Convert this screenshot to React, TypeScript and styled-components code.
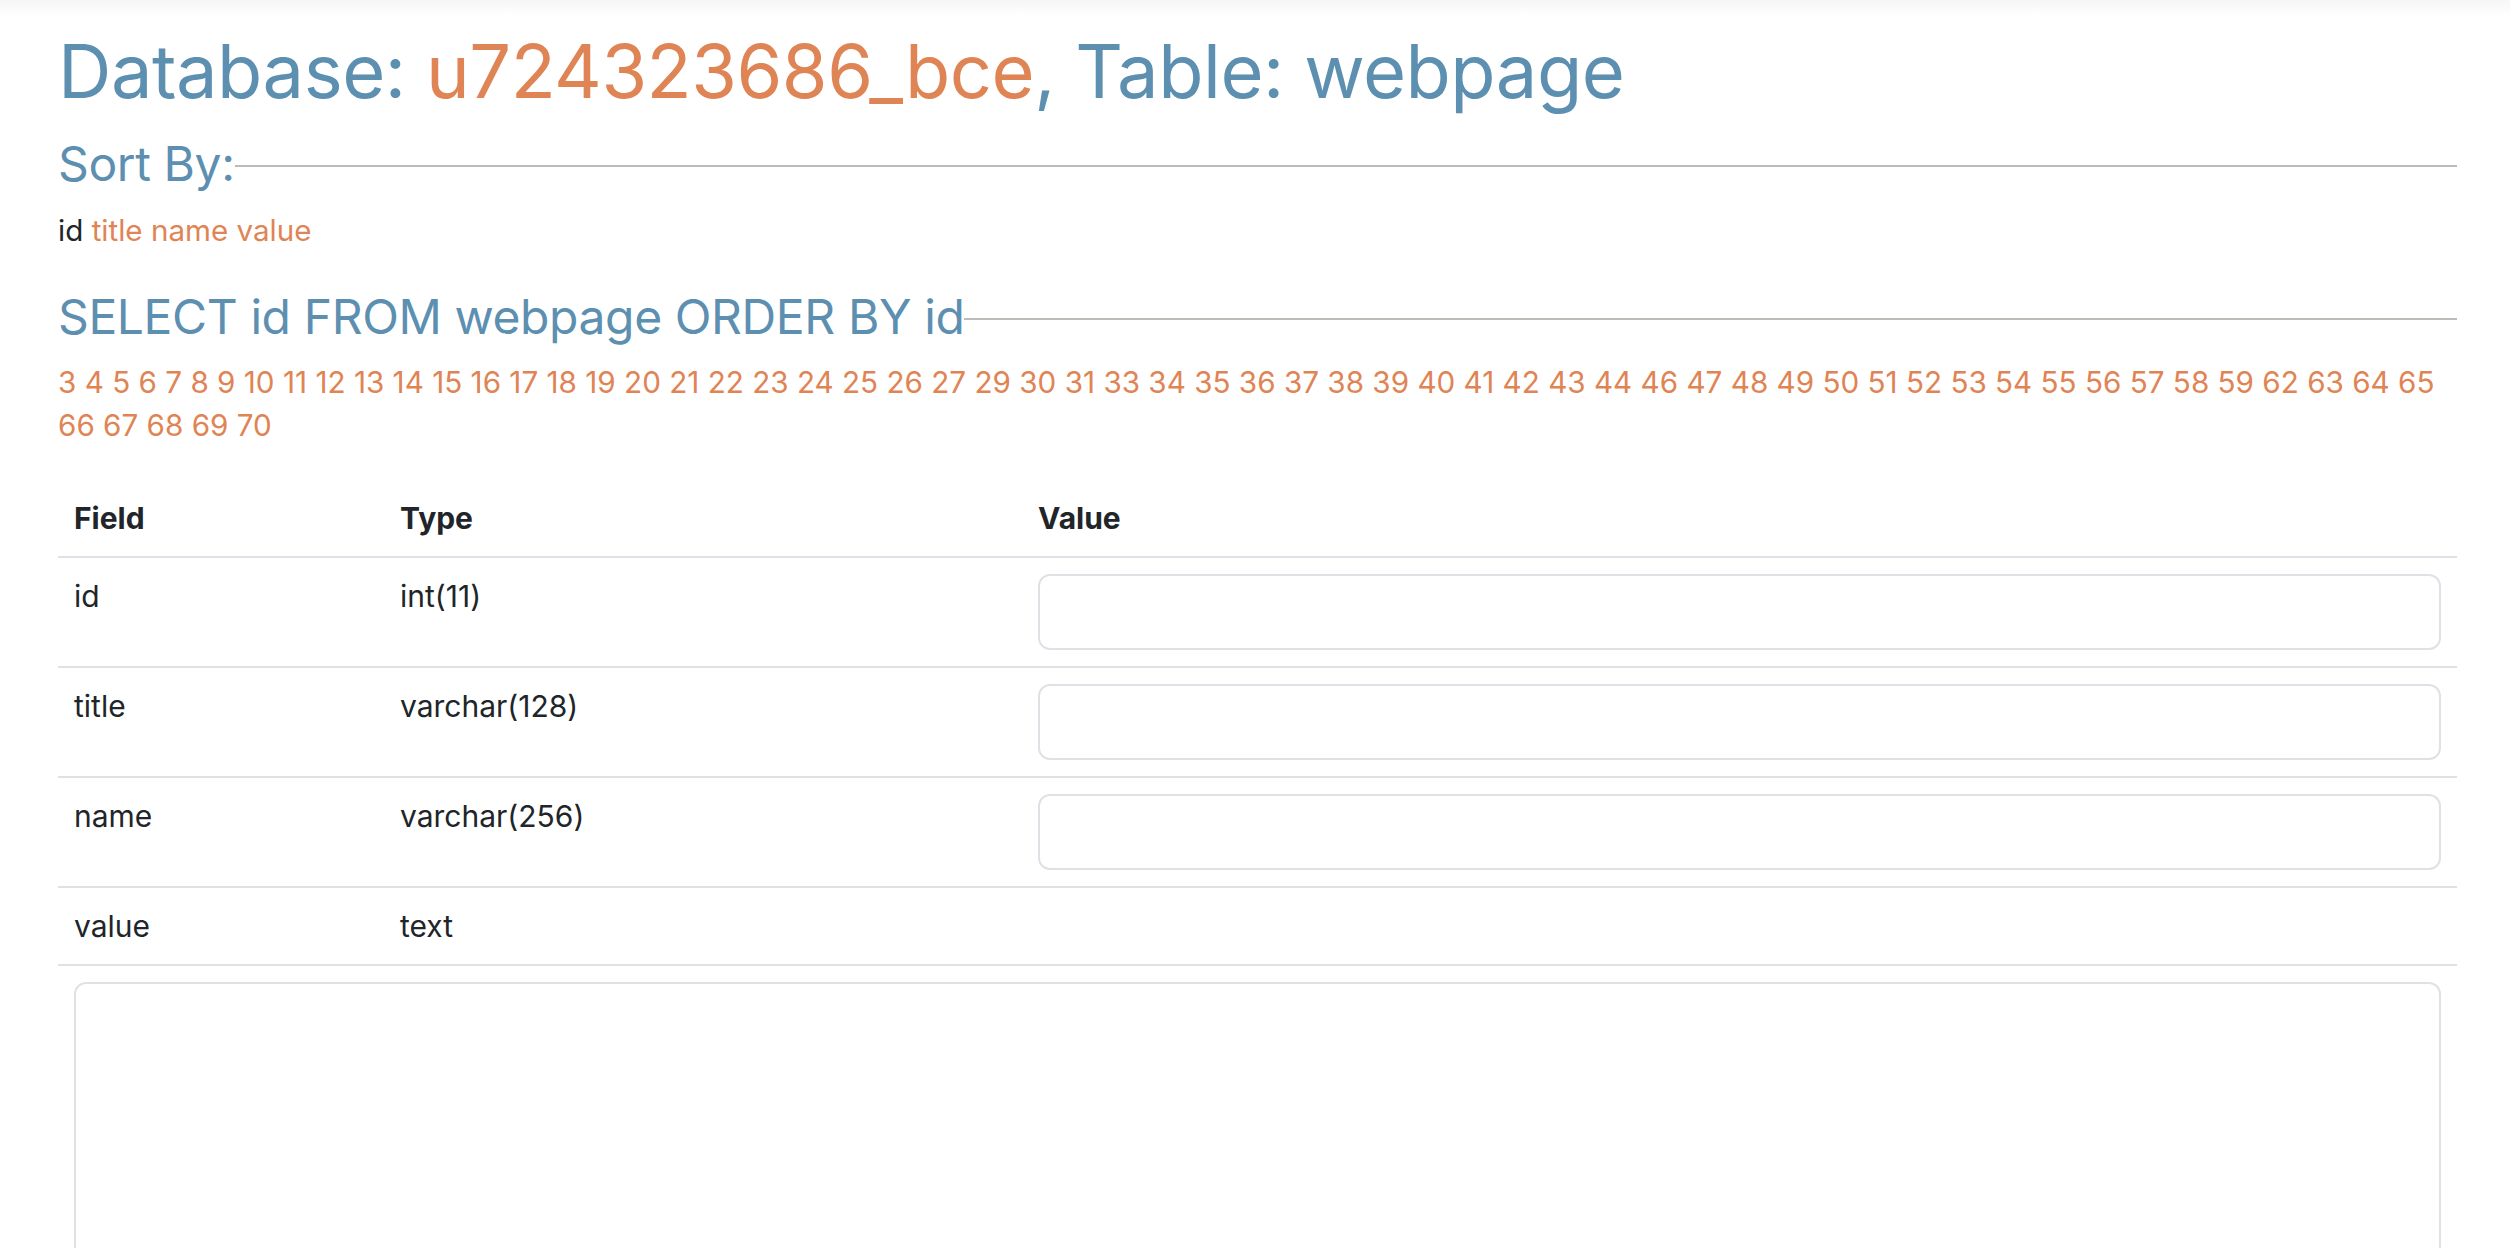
import React from "react";
import styled, { createGlobalStyle } from "styled-components";

const GlobalStyle = createGlobalStyle`
  html, body {
    margin: 0;
    padding: 0;
    background: linear-gradient(#f6f6f6 0px, #ffffff 16px) no-repeat, #ffffff;
    font-family: Inter, "Noto Sans", "Liberation Sans", sans-serif;
    color: #212529;
  }
  * { box-sizing: border-box; }
`;

const BLUE = "#5d8fb1";
const ORANGE = "#df8454";
const LINE = "#dee2e6";

const Page = styled.main`
  padding: 25px 53px 0 58px;
  height: 1248px;
  overflow: hidden;
`;

const Title = styled.h1`
  margin: 0;
  font-size: 74px;
  line-height: 92px;
  font-weight: 400;
  color: ${BLUE};
  letter-spacing: -0.5px;
`;

const Accent = styled.span`
  color: ${ORANGE};
`;

const SectionHeading = styled.h3<{ $top: number }>`
  margin: ${(p) => p.$top}px 0 0;
  display: flex;
  align-items: center;
  font-size: 48px;
  line-height: 58px;
  font-weight: 400;
  color: ${BLUE};
  letter-spacing: -0.4px;
  white-space: nowrap;

  &::after {
    content: "";
    flex: 1;
    height: 2px;
    margin-top: 4px;
    background: #bbbcb5;
  }
`;

const SortLine = styled.p`
  margin: 13px 0 0;
  font-size: 29.6px;
  line-height: 48px;
`;

const SortLink = styled.a<{ $active?: boolean }>`
  color: ${(p) => (p.$active ? "#212529" : ORANGE)};
  text-decoration: none;
`;

const IdList = styled.p`
  margin: 15px 0 0;
  font-size: 29.65px;
  line-height: 43.2px;
  color: ${ORANGE};
`;

const IdLink = styled.a`
  color: ${ORANGE};
  text-decoration: none;
`;

const Table = styled.table`
  margin-top: 33px;
  width: 100%;
  border-collapse: collapse;
  table-layout: fixed;
  font-size: 30px;
`;

const HeadCell = styled.th`
  text-align: left;
  font-weight: 700;
  padding: 16px;
  line-height: 44px;
  border-bottom: 2px solid ${LINE};
  vertical-align: top;
`;

const Cell = styled.td`
  padding: 16px;
  line-height: 44px;
  border-bottom: 2px solid ${LINE};
  vertical-align: top;
`;

const WideCell = styled.td`
  padding: 16px;
`;

const TextInput = styled.input`
  display: block;
  width: 100%;
  height: 76px;
  border: 2px solid ${LINE};
  border-radius: 12px;
  background: #fff;
  outline: none;
  font: inherit;
  padding: 0 24px;
`;

const TextArea = styled.textarea`
  display: block;
  width: 100%;
  height: 500px;
  border: 2px solid ${LINE};
  border-radius: 12px;
  background: #fff;
  outline: none;
  resize: none;
  font: inherit;
`;

const ids = [
  3, 4, 5, 6, 7, 8, 9, 10, 11, 12, 13, 14, 15, 16, 17, 18, 19, 20, 21, 22, 23,
  24, 25, 26, 27, 29, 30, 31, 33, 34, 35, 36, 37, 38, 39, 40, 41, 42, 43, 44,
  46, 47, 48, 49, 50, 51, 52, 53, 54, 55, 56, 57, 58, 59, 62, 63, 64, 65, 66,
  67, 68, 69, 70,
];

const fields = [
  { name: "id", type: "int(11)" },
  { name: "title", type: "varchar(128)" },
  { name: "name", type: "varchar(256)" },
];

export default function App() {
  return (
    <>
      <GlobalStyle />
      <Page>
        <Title>
          Database: <Accent>u724323686_bce</Accent>, Table: webpage
        </Title>
        <SectionHeading $top={18}>Sort By:</SectionHeading>
        <SortLine>
          <SortLink $active href="#">id</SortLink>{" "}
          <SortLink href="#">title</SortLink>{" "}
          <SortLink href="#">name</SortLink>{" "}
          <SortLink href="#">value</SortLink>
        </SortLine>
        <SectionHeading $top={34}>SELECT id FROM webpage ORDER BY id</SectionHeading>
        <IdList>
          {ids.map((id, i) => (
            <React.Fragment key={id}>
              {i > 0 ? " " : ""}
              <IdLink href="#">{id}</IdLink>
            </React.Fragment>
          ))}
        </IdList>
        <Table>
          <colgroup>
            <col style={{ width: 326 }} />
            <col style={{ width: 638 }} />
            <col />
          </colgroup>
          <thead>
            <tr>
              <HeadCell>Field</HeadCell>
              <HeadCell>Type</HeadCell>
              <HeadCell>Value</HeadCell>
            </tr>
          </thead>
          <tbody>
            {fields.map((f) => (
              <tr key={f.name}>
                <Cell>{f.name}</Cell>
                <Cell>{f.type}</Cell>
                <Cell>
                  <TextInput type="text" />
                </Cell>
              </tr>
            ))}
            <tr>
              <Cell>value</Cell>
              <Cell>text</Cell>
              <Cell />
            </tr>
            <tr>
              <WideCell colSpan={3}>
                <TextArea />
              </WideCell>
            </tr>
          </tbody>
        </Table>
      </Page>
    </>
  );
}
